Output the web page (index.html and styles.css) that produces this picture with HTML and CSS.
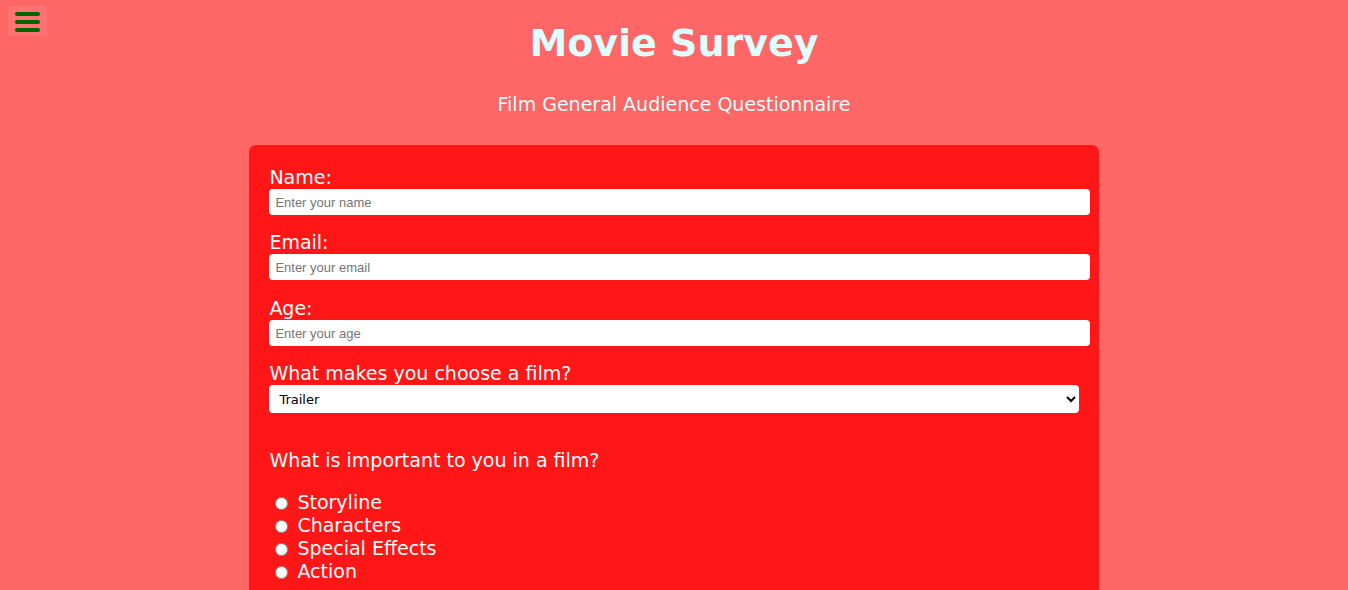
FILE: index.html
```html
<!DOCTYPE html>
<html lang="en">
<head>
<meta charset="utf-8">
<title>Movie Survey</title>
<link rel="stylesheet" href="styles.css">
</head>
<body>
<button class="menu-btn" type="button" aria-label="Menu">
  <span class="bar"></span><span class="bar"></span><span class="bar"></span>
</button>
<header class="header">
  <h1 class="title">Movie Survey</h1>
  <p class="subtitle">Film General Audience Questionnaire</p>
</header>
<form class="card">
  <div class="group">
    <label class="label" for="name">Name:</label>
    <input class="field" id="name" type="text" placeholder="Enter your name">
  </div>
  <div class="group">
    <label class="label" for="email">Email:</label>
    <input class="field" id="email" type="email" placeholder="Enter your email">
  </div>
  <div class="group group-age">
    <label class="label" for="age">Age:</label>
    <input class="field" id="age" type="number" placeholder="Enter your age">
  </div>
  <div class="group">
    <label class="label" for="choose">What makes you choose a film?</label>
    <select class="select" id="choose">
      <option>Trailer</option>
      <option>Reviews</option>
      <option>Actors</option>
    </select>
  </div>
  <p class="question">What is important to you in a film?</p>
  <div class="radios">
    <label class="radio"><input type="radio" name="imp"> Storyline</label>
    <label class="radio"><input type="radio" name="imp"> Characters</label>
    <label class="radio"><input type="radio" name="imp"> Special Effects</label>
    <label class="radio"><input type="radio" name="imp"> Action</label>
  </div>
</form>
</body>
</html>
```
FILE: styles.css
```css
html, body {
  margin: 0;
  padding: 0;
}
body {
  background: #ff6666;
  font-family: "DejaVu Sans", Verdana, sans-serif;
  color: #ffffff;
}
.menu-btn {
  position: fixed;
  top: 6px;
  left: 8px;
  width: 39px;
  height: 30px;
  padding: 6px 0 0 7px;
  margin: 0;
  border: none;
  background: rgba(255, 255, 255, 0.08);
  display: flex;
  flex-direction: column;
  gap: 4px;
  box-sizing: border-box;
  cursor: pointer;
}
.bar {
  display: block;
  width: 25px;
  height: 4px;
  border-radius: 2px;
  background: #006400;
}
.header {
  text-align: center;
  padding-top: 19px;
}
.title {
  margin: 0;
  font-size: 38px;
  line-height: 48px;
  font-weight: bold;
  color: #e0ffff;
}
.subtitle {
  margin: 25px 0 0;
  font-size: 19px;
  line-height: 24px;
  color: #e0ffff;
}
.card {
  width: 63%;
  box-sizing: border-box;
  margin: 29px auto 0;
  background: #ff1616;
  border-radius: 7px;
  padding: 20px 20px 20px;
}
.group {
  margin-bottom: 15px;
}
.group-age {
  padding-top: 1px;
}
.label {
  display: block;
  font-size: 19px;
  line-height: 24px;
}
.field {
  display: block;
  width: calc(100% + 11px);
  height: 26px;
  box-sizing: border-box;
  border: none;
  border-radius: 4px;
  padding: 0 6px;
  font-family: "Liberation Sans", Arial, sans-serif;
  font-size: 13px;
  background: #ffffff;
  color: #000;
  outline: none;
}
.field::placeholder {
  color: #757575;
}
.select {
  display: block;
  width: 100%;
  height: 28px;
  border: none;
  border-radius: 4px;
  padding: 0 6px;
  font-family: "DejaVu Sans", sans-serif;
  font-size: 13px;
  background: #ffffff;
  color: #000;
}
.question {
  margin: 35px 0 19px;
  font-size: 19px;
  line-height: 24px;
}
.radios {
  display: flex;
  flex-direction: column;
}
.radio {
  font-size: 19px;
  line-height: 23px;
}
.radio input {
  margin: 0 3px 0 6px;
  width: 13px;
  height: 13px;
  vertical-align: -1px;
}
```
